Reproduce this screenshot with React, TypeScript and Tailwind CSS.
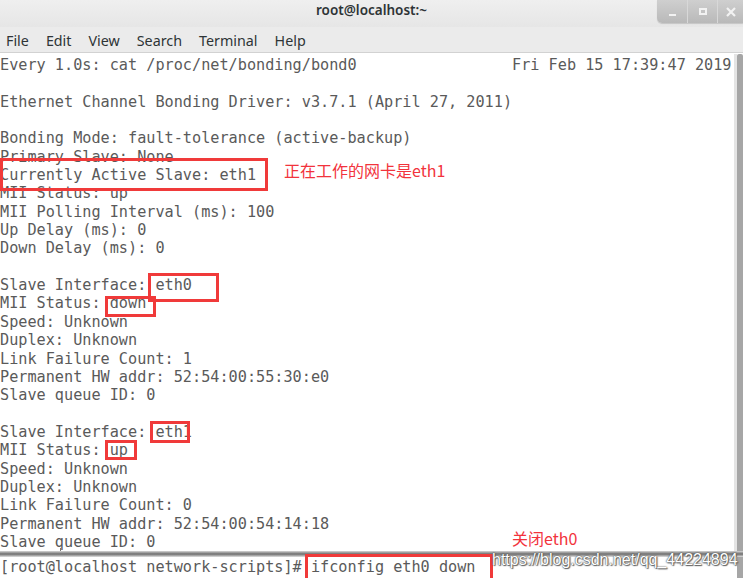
import React from "react";

/* ── terminal buffer ── */
const lines: string[] = [
  "Every 1.0s: cat /proc/net/bonding/bond0".padEnd(56, " ") + "Fri Feb 15 17:39:47 2019",
  "",
  "Ethernet Channel Bonding Driver: v3.7.1 (April 27, 2011)",
  "",
  "Bonding Mode: fault-tolerance (active-backup)",
  "Primary Slave: None",
  "Currently Active Slave: eth1",
  "MII Status: up",
  "MII Polling Interval (ms): 100",
  "Up Delay (ms): 0",
  "Down Delay (ms): 0",
  "",
  "Slave Interface: eth0",
  "MII Status: down",
  "Speed: Unknown",
  "Duplex: Unknown",
  "Link Failure Count: 1",
  "Permanent HW addr: 52:54:00:55:30:e0",
  "Slave queue ID: 0",
  "",
  "Slave Interface: eth1",
  "MII Status: up",
  "Speed: Unknown",
  "Duplex: Unknown",
  "Link Failure Count: 0",
  "Permanent HW addr: 52:54:00:54:14:18",
  "Slave queue ID: 0",
];

const menu = ["File", "Edit", "View", "Search", "Terminal", "Help"];

/* ── window controls, top right ── */
function WindowButtons() {
  return (
    <div className="absolute top-0 right-0 flex h-[23px] rounded-bl-[5px] overflow-hidden bg-gradient-to-b from-[#cfcfcf] to-[#b9b9b9] shadow-[0_1px_1px_rgba(0,0,0,0.15)]">
      <div className="w-[31px] flex items-end justify-center pb-[7px] border-r border-[#d8d8d8]">
        <div className="w-[7px] h-[2px] bg-[#f2f2f2]" />
      </div>
      <div className="w-[30px] flex items-center justify-center border-r border-[#d8d8d8]">
        <div className="w-[8px] h-[7px] border-2 border-[#f2f2f2]" />
      </div>
      <div className="w-[25px] flex items-center justify-center">
        <svg width="10" height="10" viewBox="0 0 10 10">
          <path d="M1 1 L9 9 M9 1 L1 9" stroke="#f2f2f2" strokeWidth="2.2" />
        </svg>
      </div>
    </div>
  );
}

/* ── red annotation box ── */
function Mark({ className }: { className: string }) {
  return <div className={`absolute border-[3px] border-[#f03a3a] ${className}`} />;
}

export default function App() {
  return (
    <div className="relative w-[743px] h-[578px] overflow-hidden bg-white">
      {/* title bar */}
      <div className="relative h-[27px] bg-gradient-to-b from-[#efefef] to-[#e6e6e6] flex items-center justify-center">
        <span className="text-[13.5px] font-semibold text-[#2e3436] font-['Noto_Sans',sans-serif] -mt-[6px]">
          root@localhost:~
        </span>
        <WindowButtons />
      </div>

      {/* menu bar */}
      <div className="h-[26px] bg-[#ebebeb] border-b border-[#d2d2d2] flex items-center pl-[6px] pt-[3px] gap-[17px] font-['Noto_Sans',sans-serif] text-[14.3px] text-[#2e3436]">
        {menu.map((m) => (
          <span key={m}>{m}</span>
        ))}
      </div>

      {/* terminal output */}
      <div className="flex h-[498px]">
        <div className="flex-1 pt-[3px] font-['DejaVu_Sans_Mono',monospace] text-[15.2px] leading-[18.35px] text-[#5a5a5a] whitespace-pre">
          {lines.map((l, i) => (
            <div key={i} className="h-[18.35px]">{l}</div>
          ))}
        </div>
        <div className="w-[9px] flex mt-[1px]">
          <div className="w-[3px] bg-[#e4e4e4]" />
          <div className="flex-1 bg-[#a6a6a6] rounded-t-[2px]" />
        </div>
      </div>

      {/* stitched second capture: shadow seam + prompt */}
      <div className="relative h-[6px] bg-gradient-to-b from-[#d8d8d8] via-[#6e6e6e] to-[#e2e2e2]">
        <div className="absolute left-[60px] -top-[3px] w-[1px] h-[3px] bg-[#777]" />
      </div>
      <div className="flex h-[21px]">
        <div className="flex-1 pt-[1px] font-['DejaVu_Sans_Mono',monospace] text-[15.2px] leading-[18.35px] text-[#5a5a5a] whitespace-pre">
          [root@localhost network-scripts]# ifconfig eth0 down
        </div>
        <div className="w-[6px] bg-[#a6a6a6]" />
      </div>

      {/* annotations */}
      <Mark className="left-0 top-[158px] w-[268px] h-[33px]" />
      <Mark className="left-[148px] top-[273px] w-[71px] h-[29px]" />
      <Mark className="left-[105px] top-[296px] w-[51px] h-[21px]" />
      <Mark className="left-[150px] top-[421px] w-[40px] h-[22px]" />
      <Mark className="left-[105px] top-[440px] w-[32px] h-[20px]" />
      <Mark className="left-[305px] top-[554px] w-[188px] h-[28px]" />

      <div className="absolute left-[284px] top-[159px] text-[16px] leading-[22px] text-[#f2333c] font-['Noto_Sans_CJK_SC',sans-serif]">
        正在工作的网卡是eth1
      </div>
      <div className="absolute left-[512px] top-[527px] text-[16px] leading-[22px] text-[#f2333c] font-['Noto_Sans_CJK_SC',sans-serif]">
        关闭eth0
      </div>

      {/* watermark */}
      <div className="absolute left-[492px] top-[550px] text-[16px] leading-[20px] text-white font-['Liberation_Sans',sans-serif] [text-shadow:0_0_1px_#444,0_0_2px_#555,1px_1px_1px_#666]">
        https://blog.csdn.net/qq_44224894
      </div>
    </div>
  );
}
